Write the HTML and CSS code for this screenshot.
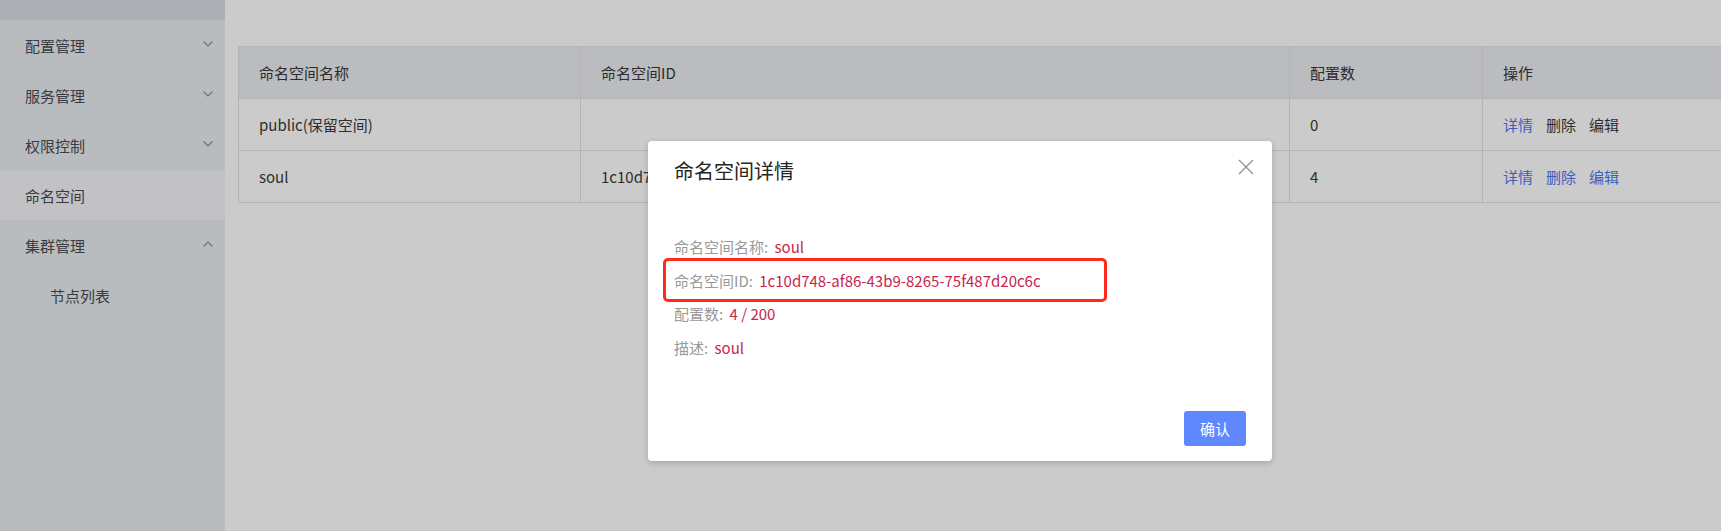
FILE: index.html
```html
<!DOCTYPE html>
<html lang="zh-CN">
<head>
<meta charset="utf-8">
<title>命名空间</title>
<link rel="stylesheet" href="styles.css">
</head>
<body>
<aside class="sidebar">
  <div class="sidebar-top"></div>
  <ul class="menu">
    <li class="menu-item"><span>配置管理</span><svg class="chev" width="10" height="6" viewBox="0 0 10 6"><path d="M0.5 0.5 L5 5 L9.5 0.5" fill="none" stroke="#6b6e72" stroke-width="1.1"/></svg></li>
    <li class="menu-item"><span>服务管理</span><svg class="chev" width="10" height="6" viewBox="0 0 10 6"><path d="M0.5 0.5 L5 5 L9.5 0.5" fill="none" stroke="#6b6e72" stroke-width="1.1"/></svg></li>
    <li class="menu-item"><span>权限控制</span><svg class="chev" width="10" height="6" viewBox="0 0 10 6"><path d="M0.5 0.5 L5 5 L9.5 0.5" fill="none" stroke="#6b6e72" stroke-width="1.1"/></svg></li>
    <li class="menu-item active"><span>命名空间</span></li>
    <li class="menu-item"><span>集群管理</span><svg class="chev" width="10" height="6" viewBox="0 0 10 6"><path d="M0.5 5.5 L5 1 L9.5 5.5" fill="none" stroke="#6b6e72" stroke-width="1.1"/></svg></li>
    <li class="menu-item sub"><span>节点列表</span></li>
  </ul>
</aside>
<main class="main">
  <table class="ns-table">
    <colgroup>
      <col class="c1"><col class="c2"><col class="c3"><col class="c4">
    </colgroup>
    <thead>
      <tr><th>命名空间名称</th><th>命名空间ID</th><th>配置数</th><th>操作</th></tr>
    </thead>
    <tbody>
      <tr>
        <td>public(保留空间)</td><td></td><td>0</td>
        <td><a class="op link">详情</a><a class="op">删除</a><a class="op">编辑</a></td>
      </tr>
      <tr>
        <td>soul</td><td>1c10d748-af86-43b9-8265-75f487d20c6c</td><td>4</td>
        <td><a class="op link">详情</a><a class="op link">删除</a><a class="op link">编辑</a></td>
      </tr>
    </tbody>
  </table>
</main>
<div class="dialog">
  <div class="dialog-header">
    <h2 class="dialog-title">命名空间详情</h2>
    <button class="dialog-close" aria-label="close"><svg width="16" height="16" viewBox="0 0 16 16"><path d="M1 1 L15 15 M15 1 L1 15" stroke="#8e9094" stroke-width="1.3" fill="none"/></svg></button>
  </div>
  <div class="dialog-body">
    <p class="line"><span class="label">命名空间名称:</span> <span class="value">soul</span></p>
    <p class="line"><span class="label">命名空间ID:</span> <span class="value">1c10d748-af86-43b9-8265-75f487d20c6c</span></p>
    <p class="line"><span class="label">配置数:</span> <span class="value">4 / 200</span></p>
    <p class="line"><span class="label">描述:</span> <span class="value">soul</span></p>
  </div>
  <div class="highlight"></div>
  <div class="dialog-footer">
    <button class="btn-primary">确认</button>
  </div>
</div>
</body>
</html>
```
FILE: styles.css
```css
* { box-sizing: border-box; }
html, body {
  margin: 0;
  padding: 0;
  width: 1721px;
  height: 531px;
  overflow: hidden;
}
body {
  display: flex;
  font-family: "Noto Sans CJK SC", "Noto Sans", sans-serif;
  font-size: 15px;
  color: #2e2e2e;
  background: #cbcbcb;
  position: relative;
}
.sidebar {
  width: 225px;
  flex: 0 0 225px;
  height: 531px;
  background: #b9bcbf;
}
.sidebar-top {
  height: 20px;
  background: #acafb3;
}
.menu {
  list-style: none;
  margin: 0;
  padding: 0;
}
.menu-item {
  height: 50px;
  display: flex;
  align-items: center;
  justify-content: space-between;
  padding: 0 12px 0 25px;
  color: #3a3b3e;
  line-height: 1;
}
.menu-item .chev { margin-top: -2px; }
.menu-item.active { background: #c2c1c6; }
.menu-item.sub { padding-left: 50px; }

.main {
  flex: 1;
  padding: 46px 0 0 13px;
  overflow: hidden;
}
.ns-table {
  width: 1500px;
  border-collapse: collapse;
  table-layout: fixed;
  border: 1px solid #b4b4b6;
}
.ns-table .c1 { width: 342px; }
.ns-table .c2 { width: 709px; }
.ns-table .c3 { width: 193px; }
.ns-table th, .ns-table td {
  height: 52px;
  padding: 0 20px;
  text-align: left;
  font-weight: normal;
  border: 1px solid #b4b4b6;
  white-space: nowrap;
  overflow: hidden;
}
.ns-table thead th {
  background: #bbbcbf;
  color: #2c2c2e;
}
.op {
  color: #2e2e2e;
  margin-right: 13px;
  cursor: pointer;
}
.op.link { color: #3a5fbd; }

.dialog {
  position: absolute;
  left: 648px;
  top: 141px;
  width: 624px;
  height: 320px;
  background: #fff;
  border-radius: 4px;
  box-shadow: 0 2px 6px rgba(0, 0, 0, 0.18);
  display: flex;
  flex-direction: column;
}
.dialog-header {
  padding: 18px 26px 0;
}
.dialog-title {
  margin: 0;
  font-size: 20px;
  line-height: 24px;
  font-weight: normal;
  color: #262626;
}
.dialog-close {
  position: absolute;
  top: 18px;
  right: 18px;
  width: 16px;
  height: 16px;
  padding: 0;
  border: 0;
  background: none;
  display: block;
}
.dialog-close svg { display: block; }
.dialog-body {
  padding: 47px 26px 0;
}
.line {
  margin: 0;
  line-height: 33.5px;
  height: 33.5px;
}
.label { color: #999; }
.value { color: #c7254e; margin-left: 3px; }
.highlight {
  position: absolute;
  left: 15px;
  top: 117px;
  width: 444px;
  height: 44px;
  border: 3px solid #ff2a1c;
  border-radius: 5px;
}
.dialog-footer {
  margin-top: auto;
  padding: 0 26px 15px;
  display: flex;
  justify-content: flex-end;
}
.btn-primary {
  width: 62px;
  height: 35px;
  padding: 0;
  border: 0;
  border-radius: 3px;
  background: #5f88ff;
  color: #fff;
  font-family: "Noto Sans CJK SC", sans-serif;
  font-size: 15px;
}
```
